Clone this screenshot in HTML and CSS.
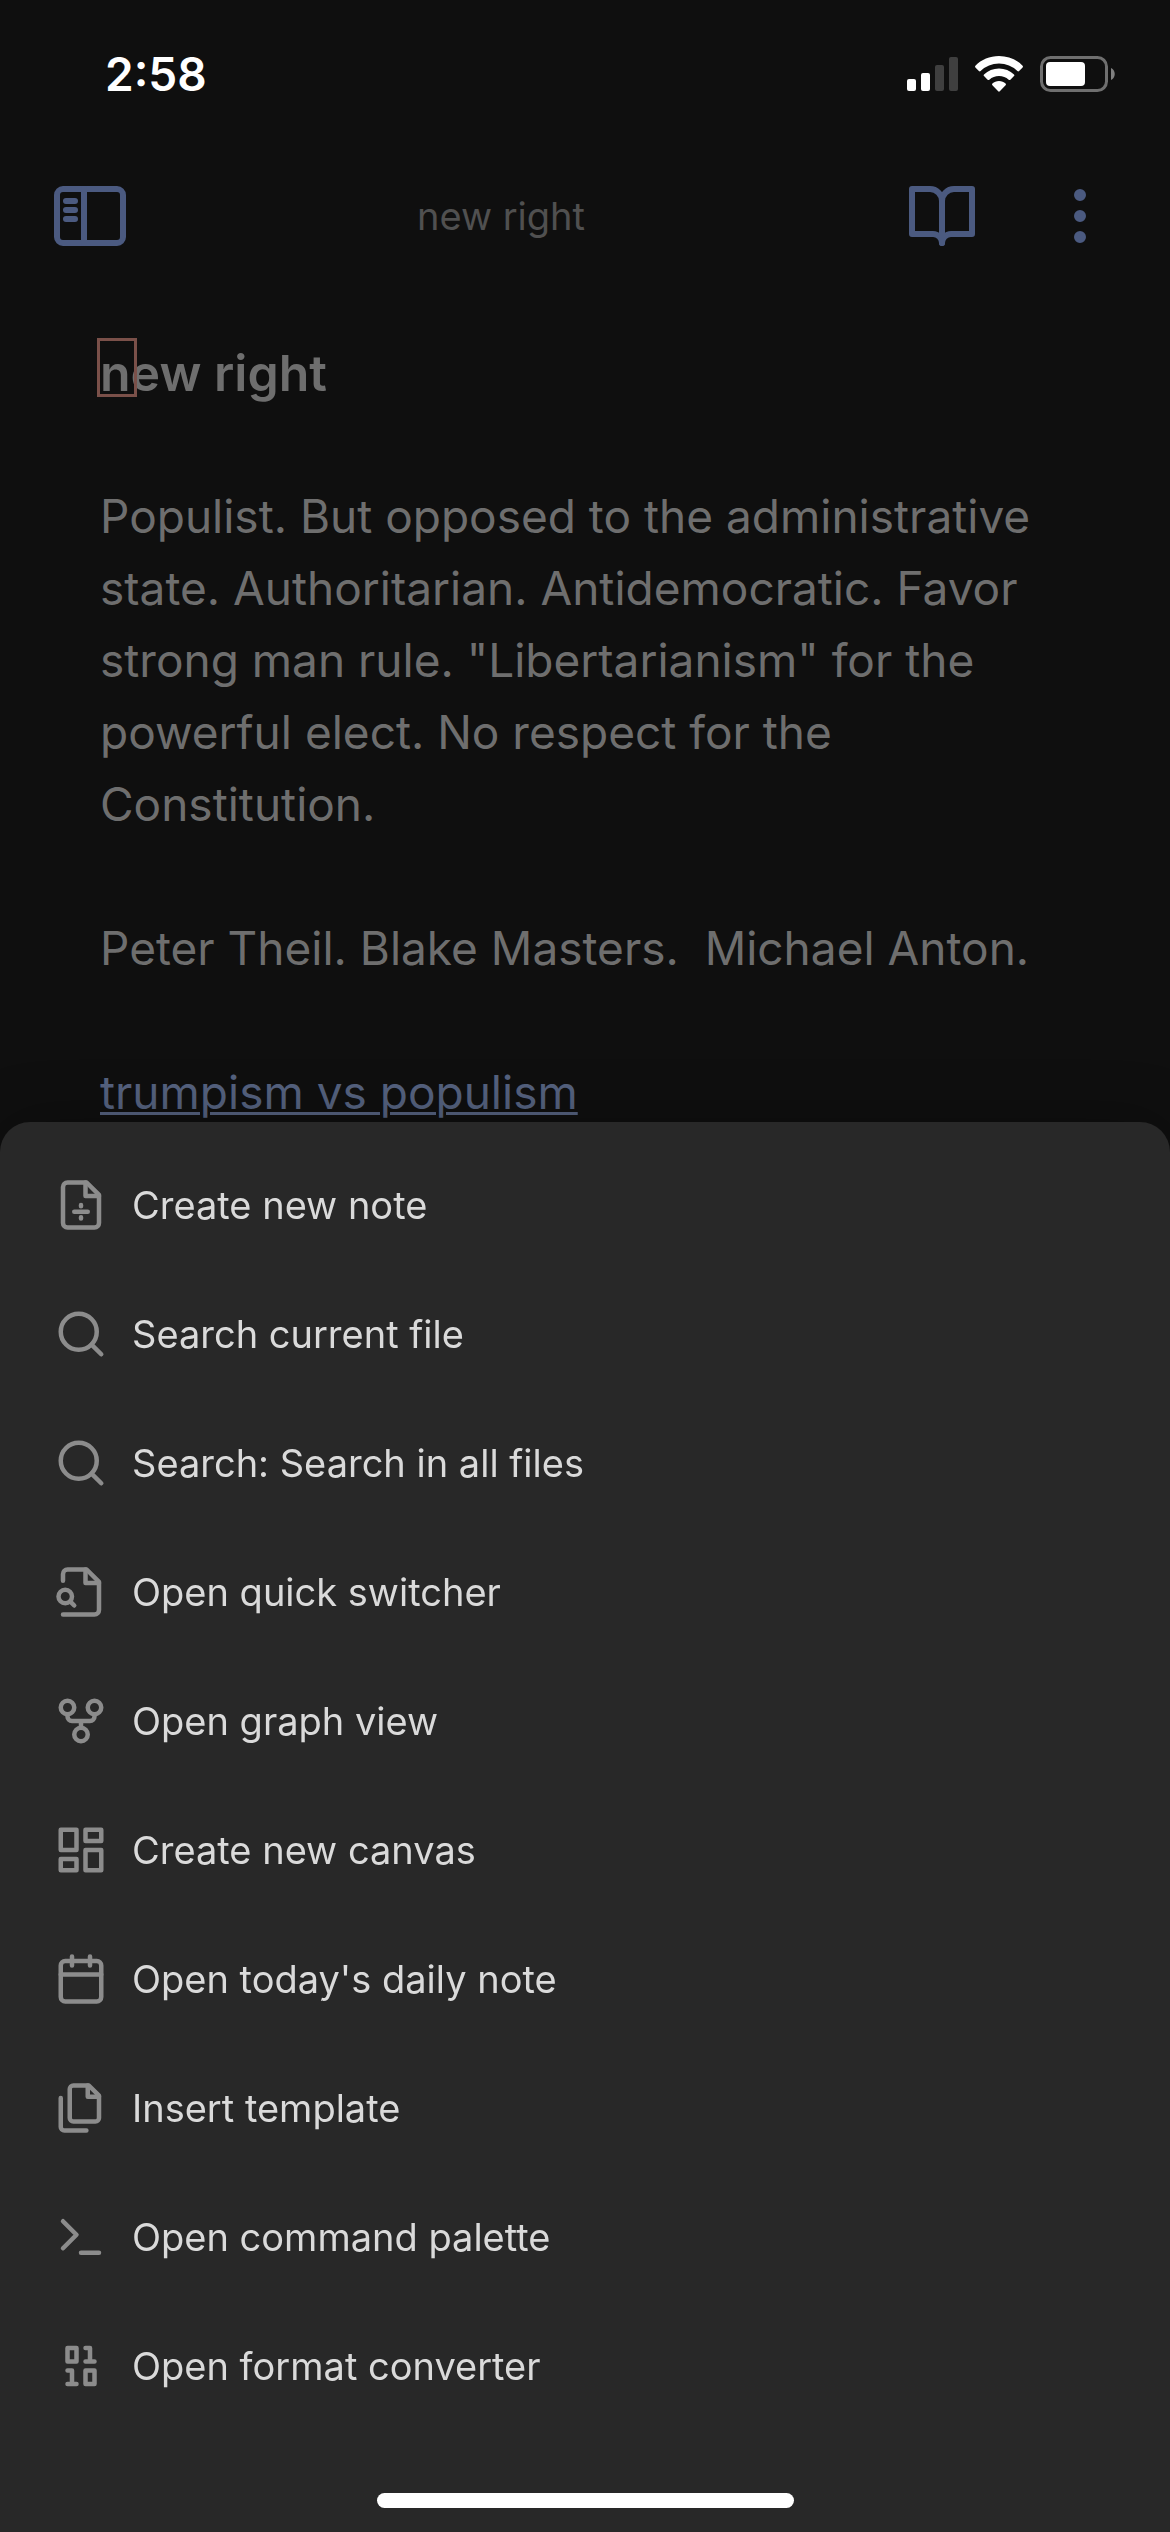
FILE: index.html
```html
<!DOCTYPE html>
<html lang="en">
<head>
<meta charset="utf-8">
<meta name="viewport" content="width=device-width, initial-scale=1">
<title>new right</title>
<link rel="stylesheet" href="styles.css">
</head>
<body>
<div class="app">
  <div class="status-bar">
    <span class="time">2:58</span>
    <div class="indicators">
      <svg class="signal" viewBox="0 0 51 34" aria-hidden="true">
        <rect x="0" y="22" width="9" height="12" rx="2"/>
        <rect x="14" y="16" width="9" height="18" rx="2"/>
        <rect class="faint" x="28" y="8" width="9" height="26" rx="2"/>
        <rect class="faint" x="42" y="0" width="9" height="34" rx="2"/>
      </svg>
      <svg class="wifi" viewBox="0 0 48 36" aria-hidden="true">
        <path d="M24 0c9.200 0 17.600 3.600 23.600 9.700.5.500.5 1.200 0 1.700l-3.500 3.600c-.5.500-1.200.5-1.700 0A26.400 26.400 0 0 0 24 7.500 26.400 26.400 0 0 0 5.600 15c-.5.500-1.200.5-1.700 0L.4 11.400c-.5-.5-.5-1.200 0-1.700C6.400 3.600 14.800 0 24 0z"/>
        <path d="M24 12.500c5.800 0 11 2.200 15 5.900.5.500.5 1.200 0 1.700l-3.600 3.600c-.5.500-1.200.5-1.700 0a14.500 14.500 0 0 0-19.400 0c-.5.500-1.200.5-1.700 0L9 20.100c-.5-.5-.5-1.200 0-1.700 4-3.700 9.200-5.900 15-5.900z"/>
        <path d="M24 25c2.600 0 4.900 1 6.600 2.500.5.500.5 1.200 0 1.700l-5.800 6.100c-.5.500-1.200.5-1.600 0l-5.800-6.100c-.5-.5-.5-1.200 0-1.700C19.100 26 21.400 25 24 25z"/>
      </svg>
      <svg class="battery" viewBox="0 0 75 36" aria-hidden="true">
        <rect class="shell" x="1.500" y="1.500" width="65" height="33" rx="9"/>
        <rect x="6" y="6" width="39" height="24" rx="4"/>
        <path class="nub" d="M71 12c5 2 5 10 0 12z"/>
      </svg>
    </div>
  </div>

  <header class="view-header">
    <button class="icon-button" type="button" aria-label="Toggle sidebar">
      <svg class="icon" viewBox="0 0 24 24" aria-hidden="true"><rect x="1" y="3" width="22" height="18" rx="2"/><path d="M10 3v18M4 7h3M4 10h3M4 13h3"/></svg>
    </button>
    <div class="view-title">new right</div>
    <div class="view-actions">
      <button class="icon-button" type="button" aria-label="Reading view">
        <svg class="icon" viewBox="0 0 24 24" aria-hidden="true"><path d="M2 3h6a4 4 0 0 1 4 4v14a3 3 0 0 0-3-3H2z"/><path d="M22 3h-6a4 4 0 0 0-4 4v14a3 3 0 0 1 3-3h7z"/></svg>
      </button>
      <button class="icon-button" type="button" aria-label="More options">
        <svg class="icon" viewBox="0 0 24 24" aria-hidden="true"><circle cx="12" cy="5" r="1"/><circle cx="12" cy="12" r="1"/><circle cx="12" cy="19" r="1"/></svg>
      </button>
    </div>
  </header>

  <main class="note">
    <h1 class="note-title"><span class="cursor-cell">n</span>ew right</h1>
    <p class="paragraph">Populist. But opposed to the administrative state. Authoritarian. Antidemocratic. Favor strong man rule. "Libertarianism" for the powerful elect. No respect for the Constitution.</p>
    <p class="paragraph">Peter Theil. Blake Masters.&nbsp; Michael Anton.</p>
    <p class="paragraph"><a class="link" href="#">trumpism vs populism</a></p>
  </main>

  <nav class="sheet" aria-label="Quick actions">
    <button class="action" type="button">
      <svg class="action-icon" viewBox="0 0 24 24" aria-hidden="true"><path d="M14.500 2H6a2 2 0 0 0-2 2v16a2 2 0 0 0 2 2h12a2 2 0 0 0 2-2V7.500z"/><path d="M14 2v6h6M12 12v.6M12 17.400v.6M9 15h6"/></svg>
      Create new note
    </button>
    <button class="action" type="button">
      <svg class="action-icon" viewBox="0 0 24 24" aria-hidden="true"><circle cx="11" cy="11" r="8"/><path d="m21 21-4.300-4.300"/></svg>
      Search current file
    </button>
    <button class="action" type="button">
      <svg class="action-icon" viewBox="0 0 24 24" aria-hidden="true"><circle cx="11" cy="11" r="8"/><path d="m21 21-4.300-4.300"/></svg>
      Search: Search in all files
    </button>
    <button class="action" type="button">
      <svg class="action-icon" viewBox="0 0 24 24" aria-hidden="true"><path d="M4 22h14a2 2 0 0 0 2-2V7.500L14.500 2H6a2 2 0 0 0-2 2v3"/><path d="M14 2v6h6"/><circle cx="5" cy="14" r="3"/><path d="m9 18-1.500-1.500"/></svg>
      Open quick switcher
    </button>
    <button class="action" type="button">
      <svg class="action-icon" viewBox="0 0 24 24" aria-hidden="true"><circle cx="12" cy="18" r="3"/><circle cx="6" cy="6" r="3"/><circle cx="18" cy="6" r="3"/><path d="M18 9v1a2 2 0 0 1-2 2H8a2 2 0 0 1-2-2V9M12 12v3"/></svg>
      Open graph view
    </button>
    <button class="action" type="button">
      <svg class="action-icon" viewBox="0 0 24 24" aria-hidden="true"><path d="M3 3h7v9H3zM14 3h7v5h-7zM14 12h7v9h-7zM3 16h7v5H3z"/></svg>
      Create new canvas
    </button>
    <button class="action" type="button">
      <svg class="action-icon" viewBox="0 0 24 24" aria-hidden="true"><rect x="3" y="4" width="18" height="18" rx="2"/><path d="M16 2v4M8 2v4M3 10h18"/></svg>
      Open today's daily note
    </button>
    <button class="action" type="button">
      <svg class="action-icon" viewBox="0 0 24 24" aria-hidden="true"><path d="M15.500 2H8.600a1.600 1.600 0 0 0-1.600 1.600v12.800A1.600 1.600 0 0 0 8.600 18h9.800a1.600 1.600 0 0 0 1.600-1.600V6.500z"/><path d="M3 7.600v12.800A1.600 1.600 0 0 0 4.600 22h9.800M15 2v5h5"/></svg>
      Insert template
    </button>
    <button class="action" type="button">
      <svg class="action-icon" viewBox="0 0 24 24" aria-hidden="true"><path d="m4 17 6-6-6-6M12 19h8"/></svg>
      Open command palette
    </button>
    <button class="action" type="button">
      <svg class="action-icon" viewBox="0 0 24 24" aria-hidden="true"><path d="M6 4h4v6H6zM14 14h4v6h-4zM6 20h4M14 10h4M6 14h2v6M14 4h2v6"/></svg>
      Open format converter
    </button>
    <div class="home-indicator"></div>
  </nav>
</div>
</body>
</html>
```
FILE: styles.css
```css
*,
*::after {
  box-sizing: border-box;
}

body {
  margin: 0;
  background: #0f0f0f;
  color: #6e6e6e;
  font-family: Inter, "Liberation Sans", sans-serif;
}

button {
  margin: 0;
  padding: 0;
  border: 0;
  background: none;
  color: inherit;
  font: inherit;
  cursor: pointer;
}

.app {
  display: flex;
  flex-direction: column;
  min-height: 100vh;
}

.status-bar {
  display: flex;
  justify-content: space-between;
  align-items: center;
  height: 148px;
  padding: 0 55px 0 105px;
  color: #fff;
}

.time {
  font-size: 46px;
  font-weight: 600;
}

.indicators {
  display: flex;
  align-items: center;
  gap: 17px;
  fill: #fff;
}

.signal {
  width: 51px;
  height: 34px;
}

.faint {
  fill: #3f3f3f;
}

.wifi {
  width: 48px;
  height: 36px;
}

.battery {
  width: 75px;
  height: 36px;
}

.shell {
  fill: none;
  stroke: #6f6f6f;
  stroke-width: 3;
}

.nub {
  fill: #7f7f7f;
}

.view-header {
  display: flex;
  align-items: center;
  height: 136px;
  padding: 0 54px;
}

.view-actions {
  display: flex;
  gap: 66px;
  padding-left: 30px;
}

.icon-button {
  display: flex;
  color: #4b5a80;
}

.icon,
.action-icon {
  fill: none;
  stroke: currentColor;
  stroke-width: 2;
  stroke-linecap: round;
  stroke-linejoin: round;
}

.icon {
  width: 72px;
  height: 72px;
}

.view-title {
  flex: 1;
  color: #505050;
  font-size: 38px;
  text-align: center;
}

.note {
  flex: 1;
  padding: 47px 100px 0;
}

.note-title {
  margin: 0 0 65px;
  font-size: 50px;
  font-weight: 600;
  line-height: 84px;
}

.cursor-cell {
  position: relative;
}

.cursor-cell::after {
  content: "";
  position: absolute;
  top: -5px;
  left: -3px;
  width: 40px;
  height: 59px;
  border: 3px solid #7a5049;
}

.paragraph {
  margin: 0 0 72px;
  font-size: 46px;
  line-height: 72px;
}

.link {
  color: #55627f;
  text-decoration-thickness: 3px;
  text-underline-offset: 3px;
}

.sheet {
  position: fixed;
  right: 0;
  bottom: 0;
  left: 0;
  display: flex;
  flex-direction: column;
  padding: 18px 54px 24px;
  border-radius: 30px 30px 0 0;
  background: #282828;
  box-shadow: 0 0 60px rgba(0, 0, 0, 0.3);
  color: #dadada;
}

.action {
  display: flex;
  align-items: center;
  gap: 24px;
  height: 129px;
  font-size: 38px;
  text-align: left;
}

.action-icon {
  width: 54px;
  height: 54px;
  color: #8c8c8c;
}

.home-indicator {
  align-self: center;
  width: 417px;
  height: 15px;
  margin-top: 63px;
  border-radius: 8px;
  background: #fff;
}
```
